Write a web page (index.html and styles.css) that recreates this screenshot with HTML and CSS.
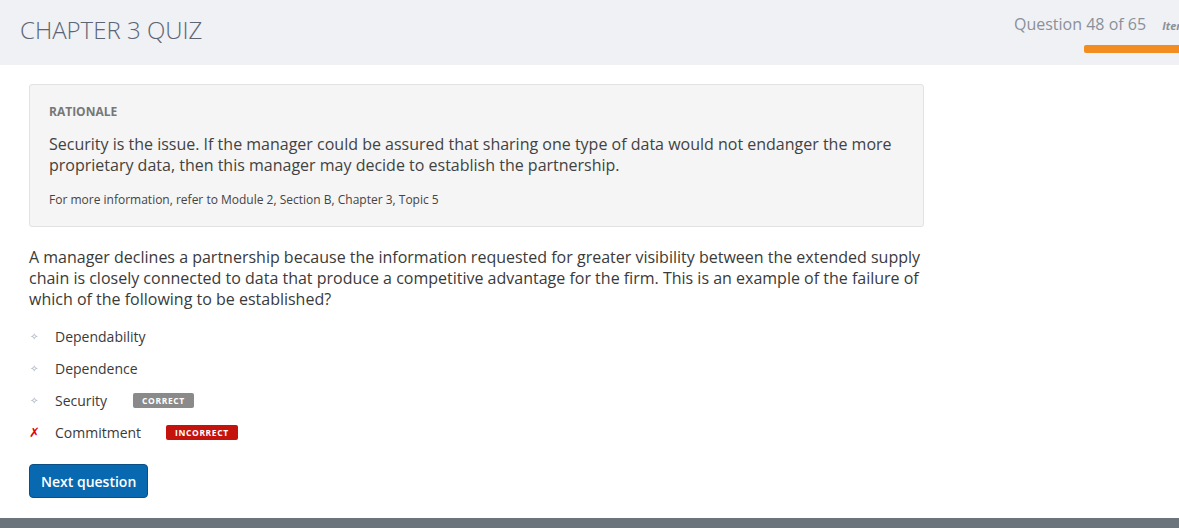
FILE: index.html
```html
<!DOCTYPE html>
<html>
<head>
<meta charset="utf-8">
<link rel="stylesheet" href="styles.css">
</head>
<body>
<header class="topbar">
  <h1 class="title">CHAPTER 3 QUIZ</h1>
  <div class="progress">
    <div class="progress-text"><span class="qcount">Question 48 of 65</span><span class="item">Item</span></div>
    <div class="progress-bar"></div>
  </div>
</header>
<main class="content">
  <section class="rationale">
    <div class="rationale-label">RATIONALE</div>
    <p class="rationale-text">Security is the issue. If the manager could be assured that sharing one type of data would not endanger the more proprietary data, then this manager may decide to establish the partnership.</p>
    <p class="rationale-ref">For more information, refer to Module 2, Section B, Chapter 3, Topic 5</p>
  </section>
  <p class="question">A manager declines a partnership because the information requested for greater visibility between the extended supply chain is closely connected to data that produce a competitive advantage for the firm. This is an example of the failure of which of the following to be established?</p>
  <ul class="options">
    <li class="option"><span class="mark dot">&#10023;</span><span class="label">Dependability</span></li>
    <li class="option"><span class="mark dot">&#10023;</span><span class="label">Dependence</span></li>
    <li class="option"><span class="mark dot">&#10023;</span><span class="label">Security</span><span class="badge badge-correct">CORRECT</span></li>
    <li class="option"><span class="mark cross">&#10007;</span><span class="label">Commitment</span><span class="badge badge-incorrect">INCORRECT</span></li>
  </ul>
  <button class="next-btn">Next question</button>
</main>
<footer class="footer"></footer>
</body>
</html>
```
FILE: styles.css
```css
html, body {
  margin: 0;
  padding: 0;
}
body {
  font-family: "Open Sans", "Noto Sans", sans-serif;
  color: #3d3d3d;
  background: #fff;
  width: 1179px;
  height: 528px;
  overflow: hidden;
  display: flex;
  flex-direction: column;
}
.topbar {
  height: 65px;
  background: #eff1f5;
  display: flex;
  justify-content: space-between;
  flex-shrink: 0;
}
.title {
  margin: 0;
  padding: 14px 0 0 20px;
  font-size: 24px;
  font-weight: 300;
  color: #5b6573;
  line-height: 32px;
}
.progress {
  display: flex;
  flex-direction: column;
  align-items: flex-end;
  padding-top: 12px;
  width: 165px;
  overflow: hidden;
}
.progress-text {
  display: flex;
  align-items: baseline;
  white-space: nowrap;
  width: 165px;
  line-height: 24px;
}
.qcount {
  font-size: 16px;
  color: #8a9099;
}
.item {
  font-size: 11px;
  font-weight: 700;
  font-style: italic;
  color: #8a9099;
  margin-left: 16px;
}
.progress-bar {
  margin-top: 7px;
  width: 95px;
  height: 8px;
  background: #f38d1f;
  border-radius: 2px 0 0 2px;
  align-self: flex-end;
}
.content {
  flex: 1;
  padding: 19px 0 0 29px;
  width: 895px;
}
.rationale {
  background: #f5f5f5;
  border: 1px solid #e2e2e2;
  border-radius: 3px;
  padding: 18px 19px 17px 19px;
}
.rationale-label {
  font-size: 12px;
  font-weight: 700;
  color: #777;
  line-height: 18px;
}
.rationale-text {
  margin: 13px 0 0 0;
  font-size: 16px;
  line-height: 21px;
  color: #424242;
}
.rationale-ref {
  margin: 15px 0 0 0;
  font-size: 12px;
  line-height: 18px;
  color: #444;
}
.question {
  margin: 20px 0 0 0;
  font-size: 16px;
  line-height: 21px;
  color: #3a3a3a;
}
.options {
  list-style: none;
  margin: 15px 0 0 0;
  padding: 0;
  display: flex;
  flex-direction: column;
  gap: 10px;
}
.option {
  display: flex;
  align-items: center;
  height: 22px;
  font-size: 14px;
  color: #3a3a3a;
}
.mark {
  width: 26px;
  display: inline-block;
}
.dot {
  color: #a8a8a8;
  font-size: 10px;
  padding-left: 1px;
  width: 25px;
}
.cross {
  color: #e3000f;
  font-size: 13px;
  font-weight: 700;
  font-style: italic;
  font-family: "DejaVu Sans", sans-serif;
}
.badge {
  display: inline-block;
  font-size: 8.5px;
  font-weight: 700;
  letter-spacing: 0.6px;
  color: #fff;
  line-height: 15px;
  height: 15px;
  padding: 0 9px;
  border-radius: 2px;
}
.badge-correct {
  background: #8a8a8a;
  margin-left: 26px;
}
.badge-incorrect {
  background: #c4120c;
  margin-left: 25px;
}
.next-btn {
  margin-top: 21px;
  font-family: "Open Sans", "Noto Sans", sans-serif;
  font-size: 14px;
  font-weight: 600;
  color: #fff;
  background: #0868b0;
  border: 1px solid #0b4f85;
  border-radius: 4px;
  height: 34px;
  padding: 0 11px;
  cursor: pointer;
}
.footer {
  height: 10px;
  background: #6b737b;
  flex-shrink: 0;
}
```
